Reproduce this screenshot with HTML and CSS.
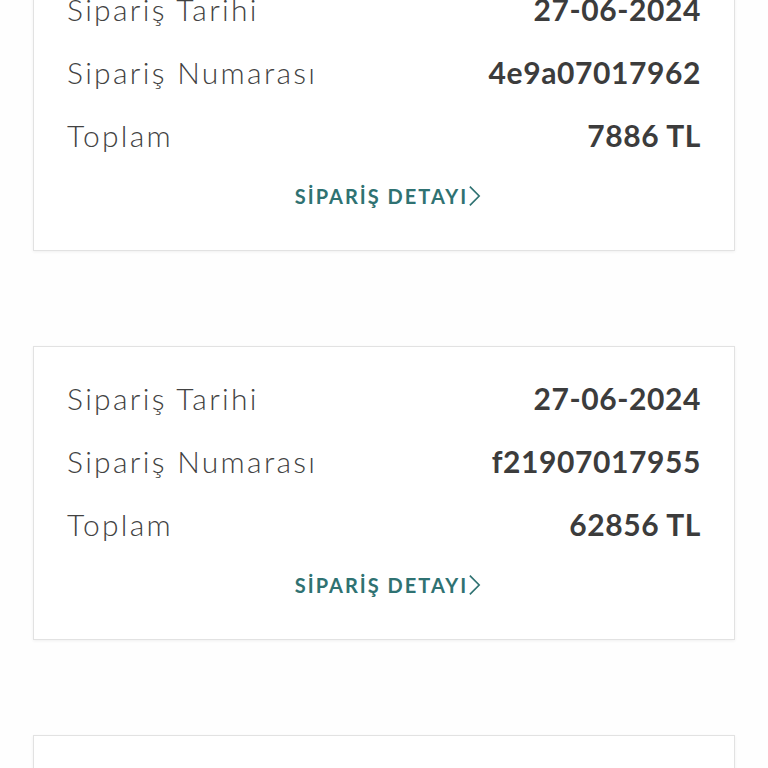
FILE: index.html
```html
<!DOCTYPE html>
<html lang="tr">
<head>
    <meta charset="UTF-8">
    <meta name="viewport" content="width=device-width, initial-scale=1.0">
    <title>Siparişlerim</title>
    <link rel="stylesheet" href="styles.css">
</head>
<body>

    <div class="orders">
        <div class="order-card">
            <div class="row"><span class="label">Sipariş Tarihi</span><span class="value">27-06-2024</span></div>
            <div class="row"><span class="label">Sipariş Numarası</span><span class="value">4e9a07017962</span></div>
            <div class="row"><span class="label">Toplam</span><span class="value">7886 TL</span></div>
            <a class="detail-link" href="#">SİPARİŞ DETAYI<svg class="chevron" viewBox="0 0 14 24" width="14" height="24"><path d="M2 2 L12 12 L2 22" /></svg></a>
        </div>

        <div class="order-card">
            <div class="row"><span class="label">Sipariş Tarihi</span><span class="value">27-06-2024</span></div>
            <div class="row"><span class="label">Sipariş Numarası</span><span class="value">f21907017955</span></div>
            <div class="row"><span class="label">Toplam</span><span class="value">62856 TL</span></div>
            <a class="detail-link" href="#">SİPARİŞ DETAYI<svg class="chevron" viewBox="0 0 14 24" width="14" height="24"><path d="M2 2 L12 12 L2 22" /></svg></a>
        </div>

        <div class="order-card">
            <div class="row"><span class="label">Sipariş Tarihi</span><span class="value">27-06-2024</span></div>
            <div class="row"><span class="label">Sipariş Numarası</span><span class="value">b71207017941</span></div>
            <div class="row"><span class="label">Toplam</span><span class="value">1240 TL</span></div>
            <a class="detail-link" href="#">SİPARİŞ DETAYI<svg class="chevron" viewBox="0 0 14 24" width="14" height="24"><path d="M2 2 L12 12 L2 22" /></svg></a>
        </div>
    </div>

</body>
</html>
```

FILE: styles.css
```css
body {
    margin: 0;
    background: #fefefe;
    font-family: Lato, 'Open Sans', sans-serif;
    color: #444444;
    overflow: hidden;
}

/* list is shown scrolled, first card starts above the fold */
.orders {
    display: flex;
    flex-direction: column;
    gap: 95px;
    margin-top: -43px;
    padding: 0 33px;
}

.order-card {
    background: #ffffff;
    border: 1px solid #e2e2e2;
    box-shadow: 0 1px 3px rgba(0, 0, 0, 0.06);
    padding: 19px 33px 41px;
    height: 294px;
    box-sizing: border-box;
}

.row {
    display: flex;
    justify-content: space-between;
    align-items: center;
    height: 63px;
}

.label {
    font-size: 30px;
    font-weight: 300;
    letter-spacing: 2.3px;
    color: #424242;
}

.value {
    font-size: 30px;
    font-weight: 700;
    letter-spacing: 0.6px;
    color: #3c3c3c;
}

.detail-link {
    display: flex;
    justify-content: center;
    align-items: center;
    margin-top: 15px;
    height: 30px;
    padding-left: 8px;
    font-size: 20px;
    font-weight: 700;
    letter-spacing: 2px;
    color: #2f7272;
    text-decoration: none;
}

.chevron {
    width: 13px;
    height: 24px;
    fill: none;
    stroke: #2f7272;
    stroke-width: 1.8;
}
```
